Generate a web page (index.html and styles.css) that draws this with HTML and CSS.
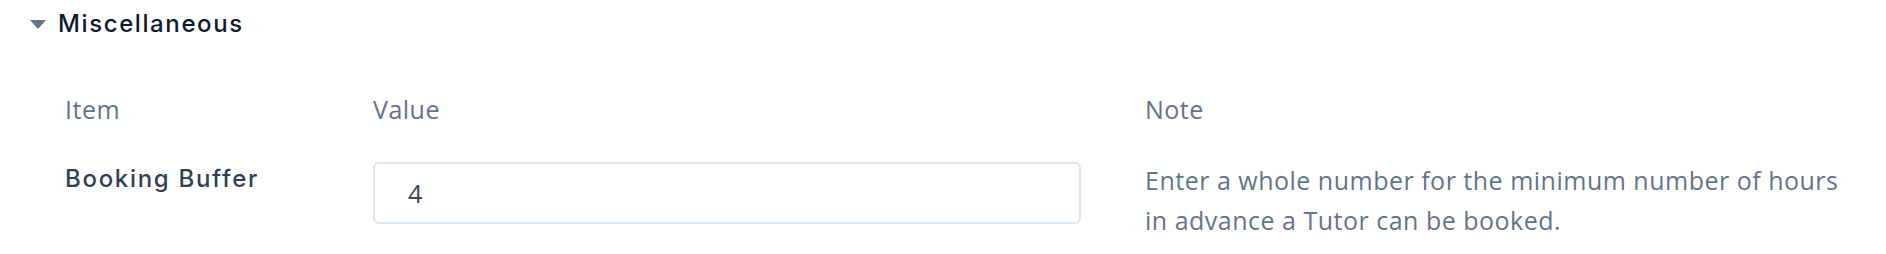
FILE: index.html
```html
<!DOCTYPE html>
<html lang="en">
<head>
<meta charset="utf-8">
<title>Miscellaneous</title>
<link rel="stylesheet" href="styles.css">
</head>
<body>
<section class="panel">
  <div class="section-head">
    <svg class="caret" width="16" height="9" viewBox="0 0 16 9" aria-hidden="true"><path d="M0 0H16L8 9Z" fill="#64748b"/></svg>
    <h2 class="section-title">Miscellaneous</h2>
  </div>
  <div class="settings-grid">
    <div class="col-label">Item</div>
    <div class="col-label">Value</div>
    <div class="col-label">Note</div>
    <div class="item-name">Booking Buffer</div>
    <div class="item-value"><input class="field" type="text" value="4"></div>
    <div class="item-note">Enter a whole number for the minimum number of hours in advance a Tutor can be booked.</div>
  </div>
</section>
</body>
</html>
```

FILE: styles.css
```css
* { box-sizing: border-box; }
html, body { margin: 0; padding: 0; background: #ffffff; }
body { font-family: "Open Sans", "Liberation Sans", sans-serif; }

.panel {
  padding: 7px 0 0 30px;
}

.section-head {
  display: flex;
  align-items: center;
  gap: 12px;
  height: 34px;
}

.caret { display: block; margin-top: 0; }

.section-title {
  margin: 0;
  font-family: Inter, "Noto Sans", sans-serif;
  font-weight: 500;
  font-size: 24px;
  letter-spacing: 1.6px;
  line-height: 34px;
  color: #0f1a2e;
}

.settings-grid {
  display: grid;
  grid-template-columns: 308px 772px 1fr;
  margin: 48px 0 0 35px;
  row-gap: 30px;
}

.col-label {
  font-size: 25px;
  letter-spacing: 0.5px;
  line-height: 40px;
  color: #64748b;
}

.item-name {
  font-family: Inter, "Noto Sans", sans-serif;
  font-weight: 500;
  font-size: 24px;
  letter-spacing: 1.7px;
  line-height: 34px;
  color: #334155;
  padding-top: 3px;
}

.item-value { padding-top: 3px; }

.field {
  display: block;
  width: 708px;
  height: 62px;
  padding: 0 0 0 33px;
  border: 2px solid #dbe4f0;
  border-radius: 6px;
  background: #ffffff;
  font-family: "Open Sans", sans-serif;
  font-size: 25px;
  color: #3a4352;
  outline: none;
}

.item-note {
  font-size: 25px;
  letter-spacing: 0.5px;
  line-height: 40px;
  color: #64748b;
  padding: 1px 30px 0 0;
}
```
